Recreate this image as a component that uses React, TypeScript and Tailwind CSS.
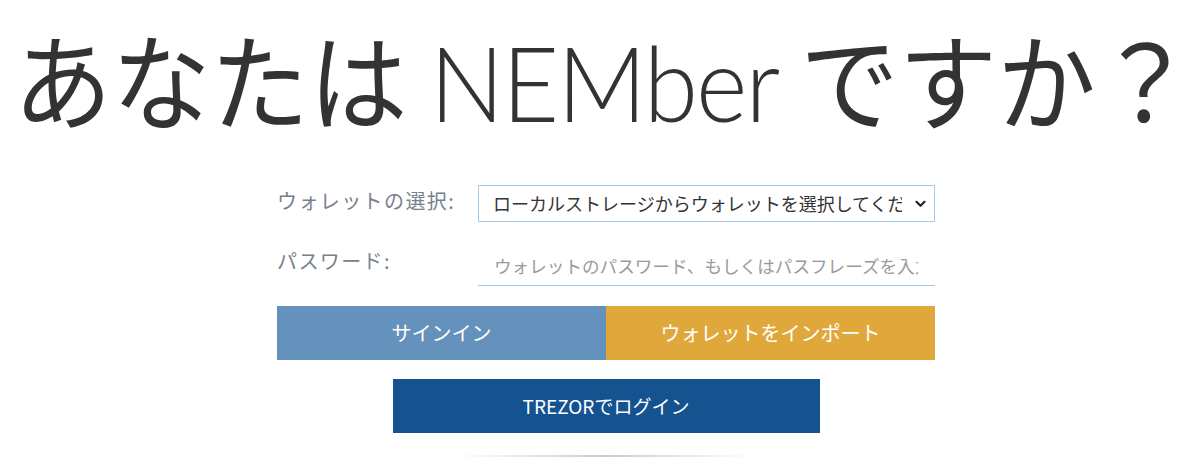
import React from 'react';

// Wallet login card — big question heading, wallet/password form, three actions
const FONT = { fontFamily: '"Noto Sans CJK JP", "Noto Sans", sans-serif' };

function Chevron() {
    return (
        <svg width="11" height="8" viewBox="0 0 11 8" className="absolute right-[9px] top-[15px] pointer-events-none">
            <path d="M1.5 1.8 L5.5 5.8 L9.5 1.8" fill="none" stroke="#222" strokeWidth="2.2" strokeLinecap="round" strokeLinejoin="round" />
        </svg>
    );
}

export default function App() {
    return (
        <div className="w-[1200px] h-[462px] bg-white overflow-hidden" style={FONT}>
            {/* ── Heading (slightly tall face like the original) ── */}
            <h1 className="flex justify-center h-[150px] pt-[17px] pl-[8px] text-[98.5px] leading-[120px] text-[#333]">
                <span className="whitespace-nowrap scale-y-[1.06]">
                    あなたは <span className="font-['Lato',sans-serif] font-light tracking-[-2px]">NEMber</span> ですか？
                </span>
            </h1>

            {/* ── Form ── */}
            <div className="w-[670px] mx-auto pl-3 mt-[35px]">
                <div className="flex items-center">
                    <label className="w-[201px] text-[20px] text-[#77818e] tracking-[1.4px] -mt-[6px]">ウォレットの選択:</label>
                    <div className="relative w-[457px] h-[37px]">
                        <select className="appearance-none w-full h-full border border-[#a6c8ea] bg-white pl-[14px] pr-8 text-[18px] text-[#333] outline-none">
                            <option>ローカルストレージからウォレットを選択してください</option>
                        </select>
                        <Chevron />
                    </div>
                </div>

                <div className="flex items-center mt-[24px]">
                    <label className="w-[201px] text-[20px] text-[#77818e] tracking-[1.4px] -mt-[10px]">パスワード:</label>
                    <input
                        type="password"
                        placeholder="ウォレットのパスワード、もしくはパスフレーズを入力してください"
                        className="w-[457px] h-[40px] border-b border-[#a6c8ea] pl-4 pr-[17px] text-[17.6px] text-[#333] placeholder:text-[#9a9a9a] outline-none"
                    />
                </div>

                <div className="flex mt-[20px] text-white text-[20px]">
                    <button className="flex-1 h-[54px] bg-[#6592bd]">サインイン</button>
                    <button className="flex-1 h-[54px] bg-[#e0a83b]">ウォレットをインポート</button>
                </div>

                <div className="flex justify-center mt-[19px]">
                    <button className="w-[427px] h-[54px] bg-[#145390] text-white text-[19px]">TREZORでログイン</button>
                </div>

                <div className="mx-auto mt-[22px] w-[300px] h-[2px] bg-gradient-to-r from-transparent via-[#c8cdd0] to-transparent" />
            </div>
        </div>
    );
}
